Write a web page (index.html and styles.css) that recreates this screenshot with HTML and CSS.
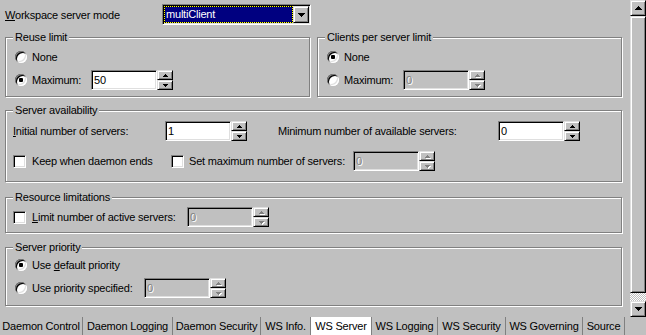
FILE: index.html
```html
<!DOCTYPE html>
<html lang="en">
<head>
    <meta charset="UTF-8">
    <title>WS Server</title>
    <link rel="stylesheet" href="styles.css">
</head>
<body>
    <div class="window">
        <div class="main">
            <div class="content">
                <div class="mode-row">
                    <span class="mode-label"><u>W</u>orkspace server mode</span>
                    <div class="combo">
                        <span class="combo-value">multiClient</span>
                        <span class="combo-btn">
                            <svg width="7" height="4" viewBox="0 0 7 4"><path d="M0 0h7v1h-1v1h-1v1h-1v1h-1v-1h-1v-1h-1v-1h-1z"/></svg>
                        </span>
                    </div>
                </div>

                <div class="top-groups">
                    <div class="group reuse">
                        <span class="legend">Reuse limit</span>
                        <div class="opt"><span class="radio"></span><span>None</span></div>
                        <div class="opt">
                            <span class="radio on"></span><span class="lbl-max">Maximum:</span>
                            <div class="field">50</div>
                            <div class="spin">
                                <span class="spin-btn"><svg width="5" height="3" viewBox="0 0 5 3"><path d="M2 0h1v1h1v1h1v1H0v-1h1v-1h1z"/></svg></span>
                                <span class="spin-btn"><svg width="5" height="3" viewBox="0 0 5 3"><path d="M0 0h5v1h-1v1h-1v1h-1v-1h-1v-1h-1z"/></svg></span>
                            </div>
                        </div>
                    </div>
                    <div class="group clients">
                        <span class="legend">Clients per server limit</span>
                        <div class="opt"><span class="radio on"></span><span>None</span></div>
                        <div class="opt">
                            <span class="radio"></span><span class="lbl-max">Maximum:</span>
                            <div class="field off">0</div>
                            <div class="spin off">
                                <span class="spin-btn"><svg width="5" height="3" viewBox="0 0 5 3"><path d="M2 0h1v1h1v1h1v1H0v-1h1v-1h1z"/></svg></span>
                                <span class="spin-btn"><svg width="5" height="3" viewBox="0 0 5 3"><path d="M0 0h5v1h-1v1h-1v1h-1v-1h-1v-1h-1z"/></svg></span>
                            </div>
                        </div>
                    </div>
                </div>

                <div class="group avail">
                    <span class="legend">Server availability</span>
                    <div class="opt">
                        <span class="lbl-initial"><u>I</u>nitial number of servers:</span>
                        <div class="field">1</div>
                        <div class="spin">
                            <span class="spin-btn"><svg width="5" height="3" viewBox="0 0 5 3"><path d="M2 0h1v1h1v1h1v1H0v-1h1v-1h1z"/></svg></span>
                            <span class="spin-btn"><svg width="5" height="3" viewBox="0 0 5 3"><path d="M0 0h5v1h-1v1h-1v1h-1v-1h-1v-1h-1z"/></svg></span>
                        </div>
                        <span class="lbl-min">Minimum number of available servers:</span>
                        <div class="field">0</div>
                        <div class="spin">
                            <span class="spin-btn"><svg width="5" height="3" viewBox="0 0 5 3"><path d="M2 0h1v1h1v1h1v1H0v-1h1v-1h1z"/></svg></span>
                            <span class="spin-btn"><svg width="5" height="3" viewBox="0 0 5 3"><path d="M0 0h5v1h-1v1h-1v1h-1v-1h-1v-1h-1z"/></svg></span>
                        </div>
                    </div>
                    <div class="opt">
                        <span class="check"></span><span class="lbl-keep">Keep when daemon ends</span>
                        <span class="check narrow"></span><span class="lbl-setmax">Set maximum number of servers:</span>
                        <div class="field off">0</div>
                        <div class="spin off">
                            <span class="spin-btn"><svg width="5" height="3" viewBox="0 0 5 3"><path d="M2 0h1v1h1v1h1v1H0v-1h1v-1h1z"/></svg></span>
                            <span class="spin-btn"><svg width="5" height="3" viewBox="0 0 5 3"><path d="M0 0h5v1h-1v1h-1v1h-1v-1h-1v-1h-1z"/></svg></span>
                        </div>
                    </div>
                </div>

                <div class="group limits">
                    <span class="legend">Resource limitations</span>
                    <div class="opt">
                        <span class="check"></span><span class="lbl-limit"><u>L</u>imit number of active servers:</span>
                        <div class="field off">0</div>
                        <div class="spin off">
                            <span class="spin-btn"><svg width="5" height="3" viewBox="0 0 5 3"><path d="M2 0h1v1h1v1h1v1H0v-1h1v-1h1z"/></svg></span>
                            <span class="spin-btn"><svg width="5" height="3" viewBox="0 0 5 3"><path d="M0 0h5v1h-1v1h-1v1h-1v-1h-1v-1h-1z"/></svg></span>
                        </div>
                    </div>
                </div>

                <div class="group priority">
                    <span class="legend">Server priority</span>
                    <div class="opt"><span class="radio on"></span><span>Use <u>d</u>efault priority</span></div>
                    <div class="opt">
                        <span class="radio"></span><span class="lbl-prio">Use priority specified:</span>
                        <div class="field off">0</div>
                        <div class="spin off">
                            <span class="spin-btn"><svg width="5" height="3" viewBox="0 0 5 3"><path d="M2 0h1v1h1v1h1v1H0v-1h1v-1h1z"/></svg></span>
                            <span class="spin-btn"><svg width="5" height="3" viewBox="0 0 5 3"><path d="M0 0h5v1h-1v1h-1v1h-1v-1h-1v-1h-1z"/></svg></span>
                        </div>
                    </div>
                </div>
            </div>

            <div class="scrollbar">
                <span class="sb-btn"><svg width="7" height="4" viewBox="0 0 7 4"><path d="M3 0h1v1h1v1h1v1h1v1H0v-1h1v-1h1v-1h1z"/></svg></span>
                <span class="thumb"></span>
                <span class="track"></span>
                <span class="sb-btn"><svg width="7" height="4" viewBox="0 0 7 4"><path d="M0 0h7v1h-1v1h-1v1h-1v1h-1v-1h-1v-1h-1v-1h-1z"/></svg></span>
            </div>
        </div>

        <div class="tabs">
            <span class="tab tab-dc">Daemon Control</span>
            <span class="tab tab-dl">Daemon Logging</span>
            <span class="tab tab-ds">Daemon Security</span>
            <span class="tab tab-wi">WS Info.</span>
            <span class="tab tab-ws active">WS Server</span>
            <span class="tab tab-wl">WS Logging</span>
            <span class="tab tab-wsec">WS Security</span>
            <span class="tab tab-wg">WS Governing</span>
            <span class="tab tab-src">Source</span>
        </div>
    </div>
</body>
</html>
```

FILE: styles.css
```css
* {
    margin: 0;
    padding: 0;
    box-sizing: border-box;
}

body {
    width: 646px;
    height: 335px;
    overflow: hidden;
    background-color: #c0c0c0;
    font-family: "Liberation Sans", Arial, sans-serif;
    font-size: 11px;
    letter-spacing: -0.2px;
    color: #000;
}

svg {
    display: block;
    fill: #000;
}

.window {
    display: flex;
    flex-direction: column;
    height: 335px;
}

.main {
    display: flex;
    height: 317px;
}

.content {
    width: 630px;
    padding: 4px 0 0 5px;
}

/* sunken and raised 3d edges */
.combo,
.field,
.check {
    border: 1px solid;
    border-color: #808080 #fff #fff #808080;
    box-shadow: inset 1px 1px #000, inset -1px -1px #dfdfdf;
    background-color: #fff;
}

.combo-btn,
.spin-btn,
.sb-btn,
.thumb {
    display: flex;
    align-items: center;
    justify-content: center;
    background-color: #c0c0c0;
    border: 1px solid;
    border-color: #dfdfdf #000 #000 #dfdfdf;
    box-shadow: inset 1px 1px #fff, inset -1px -1px #808080;
}

/* workspace mode */
.mode-row {
    display: flex;
    align-items: center;
    height: 21px;
}

.mode-label {
    width: 157px;
}

.combo {
    display: flex;
    width: 149px;
    height: 21px;
    padding: 1px;
}

.combo-value {
    flex: 1;
    border: 1px dotted #ff0;
    background: linear-gradient(#000080, #000080) padding-box, linear-gradient(#000, #000) border-box;
    color: #fff;
    line-height: 15px;
    padding-left: 1px;
}

.combo-btn {
    width: 16px;
}

/* group boxes */
.group {
    position: relative;
    border: 1px solid #808080;
    box-shadow: inset 1px 1px #fff, 1px 1px #fff;
}

.legend {
    position: absolute;
    top: -7px;
    left: 7px;
    padding: 0 2px;
    line-height: 13px;
    background-color: #c0c0c0;
}

.top-groups {
    display: flex;
    gap: 7px;
    margin-top: 12px;
}

.reuse,
.clients {
    width: 305px;
    height: 60px;
    padding: 9px 0 0 9px;
}

.avail,
.limits,
.priority {
    width: 617px;
}

.avail {
    height: 72px;
    margin-top: 13px;
    padding: 10px 0 0 7px;
}

.limits {
    height: 36px;
    margin-top: 15px;
    padding: 9px 0 0 7px;
}

.priority {
    height: 59px;
    margin-top: 14px;
    padding: 7px 0 0 9px;
}

.opt {
    display: flex;
    align-items: center;
    height: 20px;
    white-space: nowrap;
}

.opt + .opt {
    margin-top: 3px;
}

.avail .opt + .opt {
    margin-top: 10px;
}

/* controls */
.radio {
    display: flex;
    align-items: center;
    justify-content: center;
    flex: none;
    width: 12px;
    height: 12px;
    margin-right: 5px;
    border-radius: 50%;
    background-color: #fff;
    box-shadow: inset 1px 1px #808080, inset -1px -1px #fff, inset 2px 2px #000, inset -2px -2px #dfdfdf;
}

.radio.on::after {
    content: "";
    width: 4px;
    height: 4px;
    border-radius: 1px;
    background-color: #000;
}

.check {
    flex: none;
    width: 13px;
    height: 13px;
    margin-right: 6px;
}

.check.narrow {
    margin-right: 5px;
}

.field {
    flex: none;
    width: 66px;
    height: 20px;
    padding-left: 2px;
    line-height: 18px;
}

.field.off {
    background-color: #c0c0c0;
    color: #808080;
    text-shadow: 1px 1px #fff;
}

.spin {
    display: flex;
    flex-direction: column;
    flex: none;
    width: 16px;
    height: 20px;
}

.spin-btn {
    height: 10px;
}

.spin.off svg {
    fill: #808080;
    filter: drop-shadow(1px 1px 0 #fff);
}

.lbl-max {
    width: 59px;
}

.lbl-initial {
    width: 152px;
}

.lbl-min {
    width: 220px;
    margin-left: 31px;
}

.lbl-keep {
    width: 139px;
}

.lbl-setmax {
    width: 164px;
}

.lbl-limit {
    width: 155px;
}

.lbl-prio {
    width: 112px;
}

/* scrollbar */
.scrollbar {
    display: flex;
    flex-direction: column;
    width: 16px;
}

.sb-btn {
    height: 16px;
}

.thumb {
    height: 277px;
}

.track {
    height: 8px;
    background: repeating-conic-gradient(#fff 0 25%, #c0c0c0 0 50%) 0 0 / 2px 2px;
}

/* tab strip */
.tabs {
    display: flex;
    height: 18px;
}

.tab {
    border-right: 1px solid #808080;
    text-align: center;
    line-height: 18px;
    white-space: nowrap;
}

.tab.active {
    background-color: #fff;
}

.tab-dc { width: 83px; }
.tab-dl { width: 90px; }
.tab-ds { width: 88px; }
.tab-wi { width: 50px; }
.tab-ws { width: 61px; }
.tab-wl { width: 66px; }
.tab-wsec { width: 68px; }
.tab-wg { width: 77px; }
.tab-src { width: 42px; }
```
